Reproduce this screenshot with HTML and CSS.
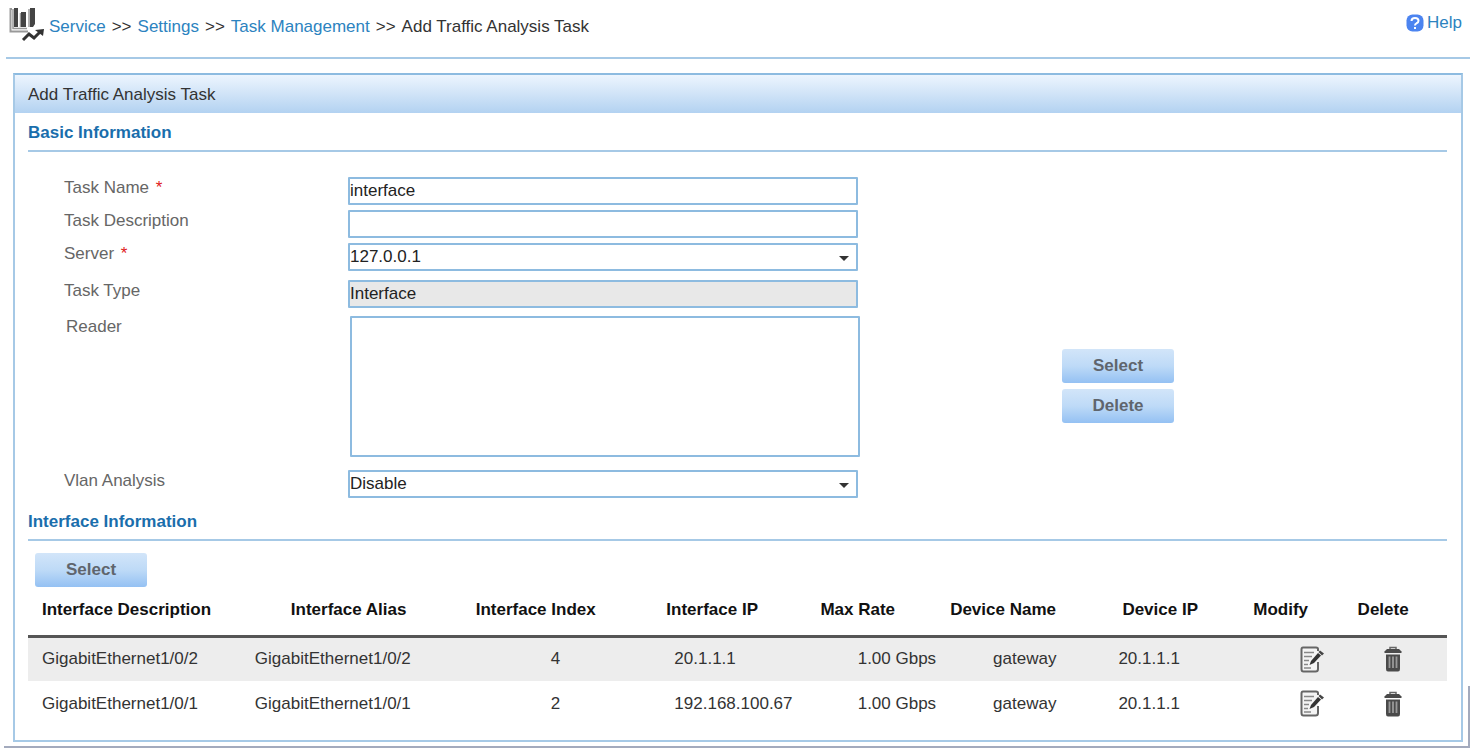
FILE: index.html
```html
<!DOCTYPE html>
<html lang="en">
<head>
    <meta charset="UTF-8">
    <meta name="viewport" content="width=device-width, initial-scale=1.0">
    <title>Add Traffic Analysis Task</title>
    <link rel="stylesheet" href="styles.css">
</head>
<body>
    <!-- shared icons -->
    <svg class="sprite" aria-hidden="true">
        <symbol id="icon-edit" viewBox="0 0 24 27">
            <path d="M18 5V3Q18 1.500 16 1.500H3Q1.500 1.500 1.500 3.500V23Q1.500 25.500 3.500 25.500H15.500Q18 25.500 18 23V16" fill="#f4f4f4" stroke="#666" stroke-width="2"/>
            <path d="M4 6.500H14M4 10.500H12M4 14.500H9M4 18.500H8M4 22H11" stroke="#888" stroke-width="1.300" fill="none"/>
            <path d="M9.500 19L11 15L18 7L21 9.500L14 17Z" fill="#333"/>
            <path d="M18.500 6L20 4.500L24 7.500L22 9.500Z" fill="#444"/>
        </symbol>
        <symbol id="icon-trash" viewBox="0 0 18 26">
            <path d="M6 4V1.500H12V4" fill="none" stroke="#666" stroke-width="1.500"/>
            <path d="M3 3H15L17.500 5.500V7H0.500V5.500Z" fill="#4a4a4a"/>
            <path d="M2 8.500H16V23Q16 25.500 14 25.500H4Q2 25.500 2 23Z" fill="#4a4a4a"/>
            <path d="M5.500 10.500V22M9 10.500V22M12.500 10.500V22" stroke="#999" stroke-width="1.800"/>
        </symbol>
    </svg>

    <div class="page">
        <header class="topbar">
            <svg class="logo" viewBox="0 0 36 36" aria-hidden="true">
                <path d="M3 2H1.500V24.500H19" fill="none" stroke="#999" stroke-width="2"/>
                <path d="M4 2V21.500H18M11.500 6V20M20 2V20" fill="none" stroke="#999" stroke-width="1.500"/>
                <path d="M5 1H9V20H5ZM12 5H17V20H12ZM21 1H26V17L24 20H21Z" fill="#444"/>
                <path d="M14 33L20 27L25 31L31 25" fill="none" stroke="#333" stroke-width="3"/>
                <path d="M26 23L35 22L34 29Z" fill="#333"/>
            </svg>
            <nav class="breadcrumb">
                <a href="#">Service</a>
                <span>&gt;&gt;</span>
                <a href="#">Settings</a>
                <span>&gt;&gt;</span>
                <a href="#">Task Management</a>
                <span>&gt;&gt;</span>
                <span>Add Traffic Analysis Task</span>
            </nav>
            <a class="help" href="#">
                <svg width="18" height="18" viewBox="0 0 18 18" aria-hidden="true">
                    <rect x="0.500" y="0.500" width="17" height="17" rx="6" fill="#4c84f0"/>
                    <path d="M5.500 7Q5.500 4 9 4T12.500 6.800Q12.500 8.500 10.500 9.300Q9 10 9 11.500" fill="none" stroke="#fff" stroke-width="2"/>
                    <rect x="8" y="13" width="2" height="2" fill="#fff"/>
                </svg>
                Help
            </a>
        </header>

        <main class="panel">
            <h1 class="panel-title">Add Traffic Analysis Task</h1>
            <form class="panel-body">
                <h2>Basic Information</h2>

                <div class="fields">
                    <div class="row">
                        <label for="taskName">Task Name <span class="required">*</span></label>
                        <input type="text" id="taskName" value="interface">
                    </div>
                    <div class="row">
                        <label for="taskDesc">Task Description</label>
                        <input type="text" id="taskDesc">
                    </div>
                    <div class="row">
                        <label for="server">Server <span class="required">*</span></label>
                        <div class="select">
                            <select id="server"><option>127.0.0.1</option></select>
                        </div>
                    </div>
                    <div class="row row-spaced">
                        <label for="taskType">Task Type</label>
                        <input type="text" id="taskType" value="Interface" readonly>
                    </div>
                    <div class="row row-reader">
                        <label for="reader">Reader</label>
                        <textarea id="reader"></textarea>
                        <div class="reader-actions">
                            <button type="button">Select</button>
                            <button type="button">Delete</button>
                        </div>
                    </div>
                    <div class="row">
                        <label for="vlan">Vlan Analysis</label>
                        <div class="select">
                            <select id="vlan"><option>Disable</option></select>
                        </div>
                    </div>
                </div>

                <h2>Interface Information</h2>
                <div class="toolbar">
                    <button type="button">Select</button>
                </div>

                <table>
                    <thead>
                        <tr>
                            <th class="description">Interface Description</th>
                            <th class="alias">Interface Alias</th>
                            <th class="index">Interface Index</th>
                            <th class="ip">Interface IP</th>
                            <th class="rate">Max Rate</th>
                            <th class="device">Device Name</th>
                            <th class="device-ip">Device IP</th>
                            <th class="modify">Modify</th>
                            <th class="delete">Delete</th>
                        </tr>
                    </thead>
                    <tbody>
                        <tr>
                            <td>GigabitEthernet1/0/2</td>
                            <td>GigabitEthernet1/0/2</td>
                            <td class="index">4</td>
                            <td class="ip">20.1.1.1</td>
                            <td class="rate">1.00 Gbps</td>
                            <td class="device">gateway</td>
                            <td class="device-ip">20.1.1.1</td>
                            <td class="modify"><a href="#" aria-label="Modify"><svg width="24" height="27"><use href="#icon-edit"/></svg></a></td>
                            <td class="delete"><a href="#" aria-label="Delete"><svg width="18" height="26"><use href="#icon-trash"/></svg></a></td>
                        </tr>
                        <tr>
                            <td>GigabitEthernet1/0/1</td>
                            <td>GigabitEthernet1/0/1</td>
                            <td class="index">2</td>
                            <td class="ip">192.168.100.67</td>
                            <td class="rate">1.00 Gbps</td>
                            <td class="device">gateway</td>
                            <td class="device-ip">20.1.1.1</td>
                            <td class="modify"><a href="#" aria-label="Modify"><svg width="24" height="27"><use href="#icon-edit"/></svg></a></td>
                            <td class="delete"><a href="#" aria-label="Delete"><svg width="18" height="26"><use href="#icon-trash"/></svg></a></td>
                        </tr>
                    </tbody>
                </table>
            </form>
        </main>
    </div>
</body>
</html>
```

FILE: styles.css
```css
:root {
    --line-color: #a6c9e6;
    --border-color: #8dbbe0;
    --link-color: #2c83c0;
    --heading-color: #1a6eac;
}

* {
    box-sizing: border-box;
    margin: 0;
    padding: 0;
}

body {
    font-family: "Liberation Sans", Arial, sans-serif;
    font-size: 17px;
    line-height: 20px;
    color: #333;
    background: #fff;
}

a {
    color: var(--link-color);
    text-decoration: none;
}

.sprite {
    position: absolute;
    width: 0;
    height: 0;
}

.page {
    position: relative;
    margin: 0 4px;
    padding-bottom: 4px;
    border-bottom: 2px solid #a3aabd;
}

/* short right edge of the outer frame */
.page::after {
    content: "";
    position: absolute;
    right: 0;
    bottom: 0;
    width: 2px;
    height: 60px;
    background: #a3aabd;
}

.topbar {
    display: flex;
    align-items: flex-start;
    margin-left: 2px;
    height: 59px;
    padding: 7px 8px 0 3px;
    border-bottom: 2px solid var(--line-color);
}

.logo {
    width: 36px;
    height: 36px;
}

.breadcrumb {
    display: flex;
    gap: 6px;
    margin-left: 4px;
    padding-top: 10px;
}

.help {
    display: flex;
    align-items: center;
    gap: 3px;
    margin-left: auto;
    padding-top: 6px;
}

.panel {
    margin: 14px 7px 0 9px;
    border: 2px solid var(--line-color);
    border-top-color: var(--border-color);
}

.panel-title {
    height: 38px;
    padding: 0 13px;
    font-size: 17px;
    font-weight: normal;
    line-height: 40px;
    background: linear-gradient(#edf5fe, #b3d2f1);
}

.panel-body {
    padding: 0 14px 14px 13px;
}

h2 {
    height: 39px;
    padding-top: 10px;
    font-size: 17px;
    line-height: 20px;
    color: var(--heading-color);
    border-bottom: 2px solid var(--line-color);
}

.fields {
    padding: 25px 0 0 36px;
}

.row {
    display: grid;
    grid-template-columns: 284px 510px 1fr;
    align-items: start;
    margin-bottom: 5px;
    color: #666;
}

.row-spaced {
    margin: 9px 0 8px;
}

.row-reader {
    padding-left: 2px;
    margin-bottom: 13px;
}

.row:last-child {
    margin-bottom: 4px;
}

label {
    padding-top: 1px;
}

.required {
    margin-left: 2px;
    color: #e02020;
}

input,
select,
textarea {
    display: block;
    width: 100%;
    height: 28px;
    font: inherit;
    font-size: 17px;
    color: #222;
    background: #fff;
    border: 2px solid var(--border-color);
    border-radius: 1px;
    outline: none;
}

input[readonly] {
    background: #e8e8e8;
}

textarea {
    height: 141px;
    resize: none;
}

.select {
    position: relative;
}

.select select {
    appearance: none;
}

.select::after {
    content: "";
    position: absolute;
    top: 13px;
    right: 9px;
    border: 5px solid transparent;
    border-top-color: #333;
    border-bottom: 0;
    pointer-events: none;
}

button {
    width: 112px;
    height: 34px;
    font: bold 17px "Liberation Sans", Arial, sans-serif;
    color: #5f656d;
    background: linear-gradient(#d2e5f9, #bedaf7 50%, #94c1f3);
    border: none;
    border-radius: 3px;
    cursor: pointer;
}

.reader-actions {
    display: flex;
    flex-direction: column;
    gap: 6px;
    padding-top: 33px;
    margin-left: 202px;
}

.toolbar {
    padding: 12px 7px;
}

table {
    width: 100%;
    border-collapse: collapse;
    table-layout: fixed;
}

th {
    height: 37px;
    padding: 1px 0 14px 14px;
    font-size: 17px;
    text-align: left;
    white-space: nowrap;
    color: #111;
    border-bottom: 3px solid #555;
}

td {
    height: 45px;
    padding-left: 14px;
    white-space: nowrap;
}

tbody tr:first-child {
    background: #ededed;
}

td svg {
    display: inline-block;
    vertical-align: middle;
}

/* column widths */
th.description { width: 15%; }
th.alias { width: 15%; padding-left: 50px; }
th.index { width: 14%; padding-left: 22px; }
th.ip { width: 11%; }
th.rate { width: 9%; padding-left: 12px; }
th.device { width: 12%; }
th.device-ip { width: 10%; padding-left: 16px; }
th.modify { width: 7%; padding-left: 5px; }
th.delete { width: 7%; padding-left: 10px; }

td.index { padding-left: 97px; }
td.ip { padding-left: 22px; }
td.rate { text-align: right; }

td.device {
    padding-right: 50px;
    text-align: right;
}

td.device-ip { padding-left: 12px; }

td.modify {
    padding-right: 24px;
    text-align: right;
}

td.delete { padding-left: 36px; }
```
